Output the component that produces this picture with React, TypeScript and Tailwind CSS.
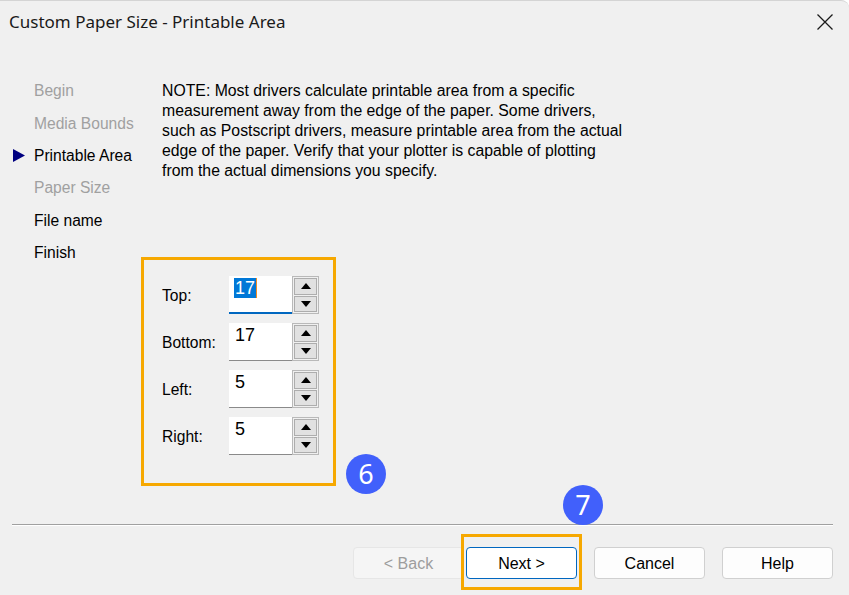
const steps = [
  { label: "Begin", enabled: false },
  { label: "Media Bounds", enabled: false },
  { label: "Printable Area", enabled: true, current: true },
  { label: "Paper Size", enabled: false },
  { label: "File name", enabled: true },
  { label: "Finish", enabled: true },
];

const margins = [
  { label: "Top:", value: "17", focused: true },
  { label: "Bottom:", value: "17" },
  { label: "Left:", value: "5" },
  { label: "Right:", value: "5" },
];

const SpinButtons = () => (
  <div className="w-[27px] h-[38px] border border-[#b9b9b9] flex flex-col p-px gap-px bg-[#f0f0f0]">
    <div className="flex-1 bg-[#e1e1e1] border border-[#adadad] flex items-center justify-center">
      <svg width="10" height="6" viewBox="0 0 10 6">
        <polygon points="0,6 10,6 5,0" fill="#000" />
      </svg>
    </div>
    <div className="flex-1 bg-[#e1e1e1] border border-[#adadad] flex items-center justify-center">
      <svg width="10" height="6" viewBox="0 0 10 6">
        <polygon points="0,0 10,0 5,6" fill="#000" />
      </svg>
    </div>
  </div>
);

const Badge = ({ n, className }: { n: string; className: string }) => (
  <div
    className={`absolute w-[40px] h-[40px] rounded-full bg-[#4160fb] text-white flex items-center justify-center text-[27px] font-['Noto_Sans',sans-serif] ${className}`}
  >
    {n}
  </div>
);

export default function App() {
  return (
    <div className="relative w-[849px] h-[595px] overflow-hidden bg-[#f0f0f0] flex flex-col font-['Liberation_Sans',Arial,sans-serif] text-black border-t border-[#d4d4d4] rounded-tr-[8px]">
      {/* title bar */}
      <div className="h-[41px] shrink-0 flex items-center justify-between pl-[9px] pr-[16px]">
        <span className="text-[17px] font-['Noto_Sans',sans-serif] text-[#1a1a1a]">
          Custom Paper Size - Printable Area
        </span>
        <svg width="16" height="16" viewBox="0 0 16 16" className="text-[#1a1a1a]">
          <path d="M0.5 0.5 L15.5 15.5 M15.5 0.5 L0.5 15.5" stroke="currentColor" strokeWidth="1.3" />
        </svg>
      </div>

      <div className="flex flex-1">
        {/* wizard steps */}
        <div className="w-[141px] shrink-0 pt-[33px] text-[15.6px]">
          {steps.map((s) => (
            <div key={s.label} className="h-[32.3px] flex items-center">
              <div className="w-[34px] pl-[13px] flex items-center">
                {s.current && (
                  <svg width="12" height="13" viewBox="0 0 12 13">
                    <polygon points="0,0 12,6.5 0,13" fill="#000080" />
                  </svg>
                )}
              </div>
              <span className={s.enabled ? "text-black" : "text-[#a0a0a0]"}>{s.label}</span>
            </div>
          ))}
        </div>

        {/* main */}
        <div className="flex flex-col">
          <p className="mt-[39px] pl-[21px] text-[15.8px] leading-[20px] whitespace-nowrap">
            NOTE: Most drivers calculate printable area from a specific
            <br />
            measurement away from the edge of the paper. Some drivers,
            <br />
            such as Postscript drivers, measure printable area from the actual
            <br />
            edge of the paper. Verify that your plotter is capable of plotting
            <br />
            from the actual dimensions you specify.
          </p>

          <div className="mt-[76px] w-[195px] h-[229px] border-[3px] border-[#f6a800] pt-[16px] pl-[18px] flex flex-col gap-[9px]">
            {margins.map((m) => (
              <div key={m.label} className="flex items-center h-[38px]">
                <span className="w-[67px] text-[15.6px] pt-[2px]">{m.label}</span>
                <div
                  className={`w-[63px] h-[38px] bg-white pl-[5px] pt-[2px] text-[18px] leading-[20px] ${
                    m.focused ? "border-b-2 border-[#0067c0]" : "border-b border-[#8a8a8a]"
                  }`}
                >
                  {m.focused ? (
                    <span className="inline-flex items-stretch">
                      <span className="bg-[#0078d7] text-white px-px">{m.value}</span>
                      <span className="w-px bg-[#f08a24]" />
                    </span>
                  ) : (
                    <span className="pl-px">{m.value}</span>
                  )}
                </div>
                <SpinButtons />
              </div>
            ))}
          </div>
        </div>
      </div>

      {/* footer */}
      <div className="shrink-0 px-[12px] pb-[16px]">
        <div className="w-[821px] border-t border-[#a0a0a0] border-b border-b-white" />
        <div className="mt-[21px] flex justify-end pr-[4px] text-[16px]">
          <button className="w-[111px] h-[32px] rounded-[4px] bg-[#f5f5f5] border border-[#e6e6e6] text-[#9d9d9d] pt-px">
            &lt; Back
          </button>
          <button className="ml-[2px] w-[111px] h-[32px] rounded-[4px] bg-white border border-[#0067c0] text-black pt-px">
            Next &gt;
          </button>
          <button className="ml-[17px] w-[111px] h-[32px] rounded-[4px] bg-[#fdfdfd] border border-[#d0d0d0] text-black pt-px">
            Cancel
          </button>
          <button className="ml-[17px] w-[111px] h-[32px] rounded-[4px] bg-[#fdfdfd] border border-[#d0d0d0] text-black pt-px">
            Help
          </button>
        </div>
      </div>

      {/* annotations */}
      <div className="absolute left-[461px] top-[533px] w-[121px] h-[56px] border-[3px] border-[#f6a800]" />
      <Badge n="6" className="left-[346px] top-[453px]" />
      <Badge n="7" className="left-[563px] top-[484px]" />
    </div>
  );
}
